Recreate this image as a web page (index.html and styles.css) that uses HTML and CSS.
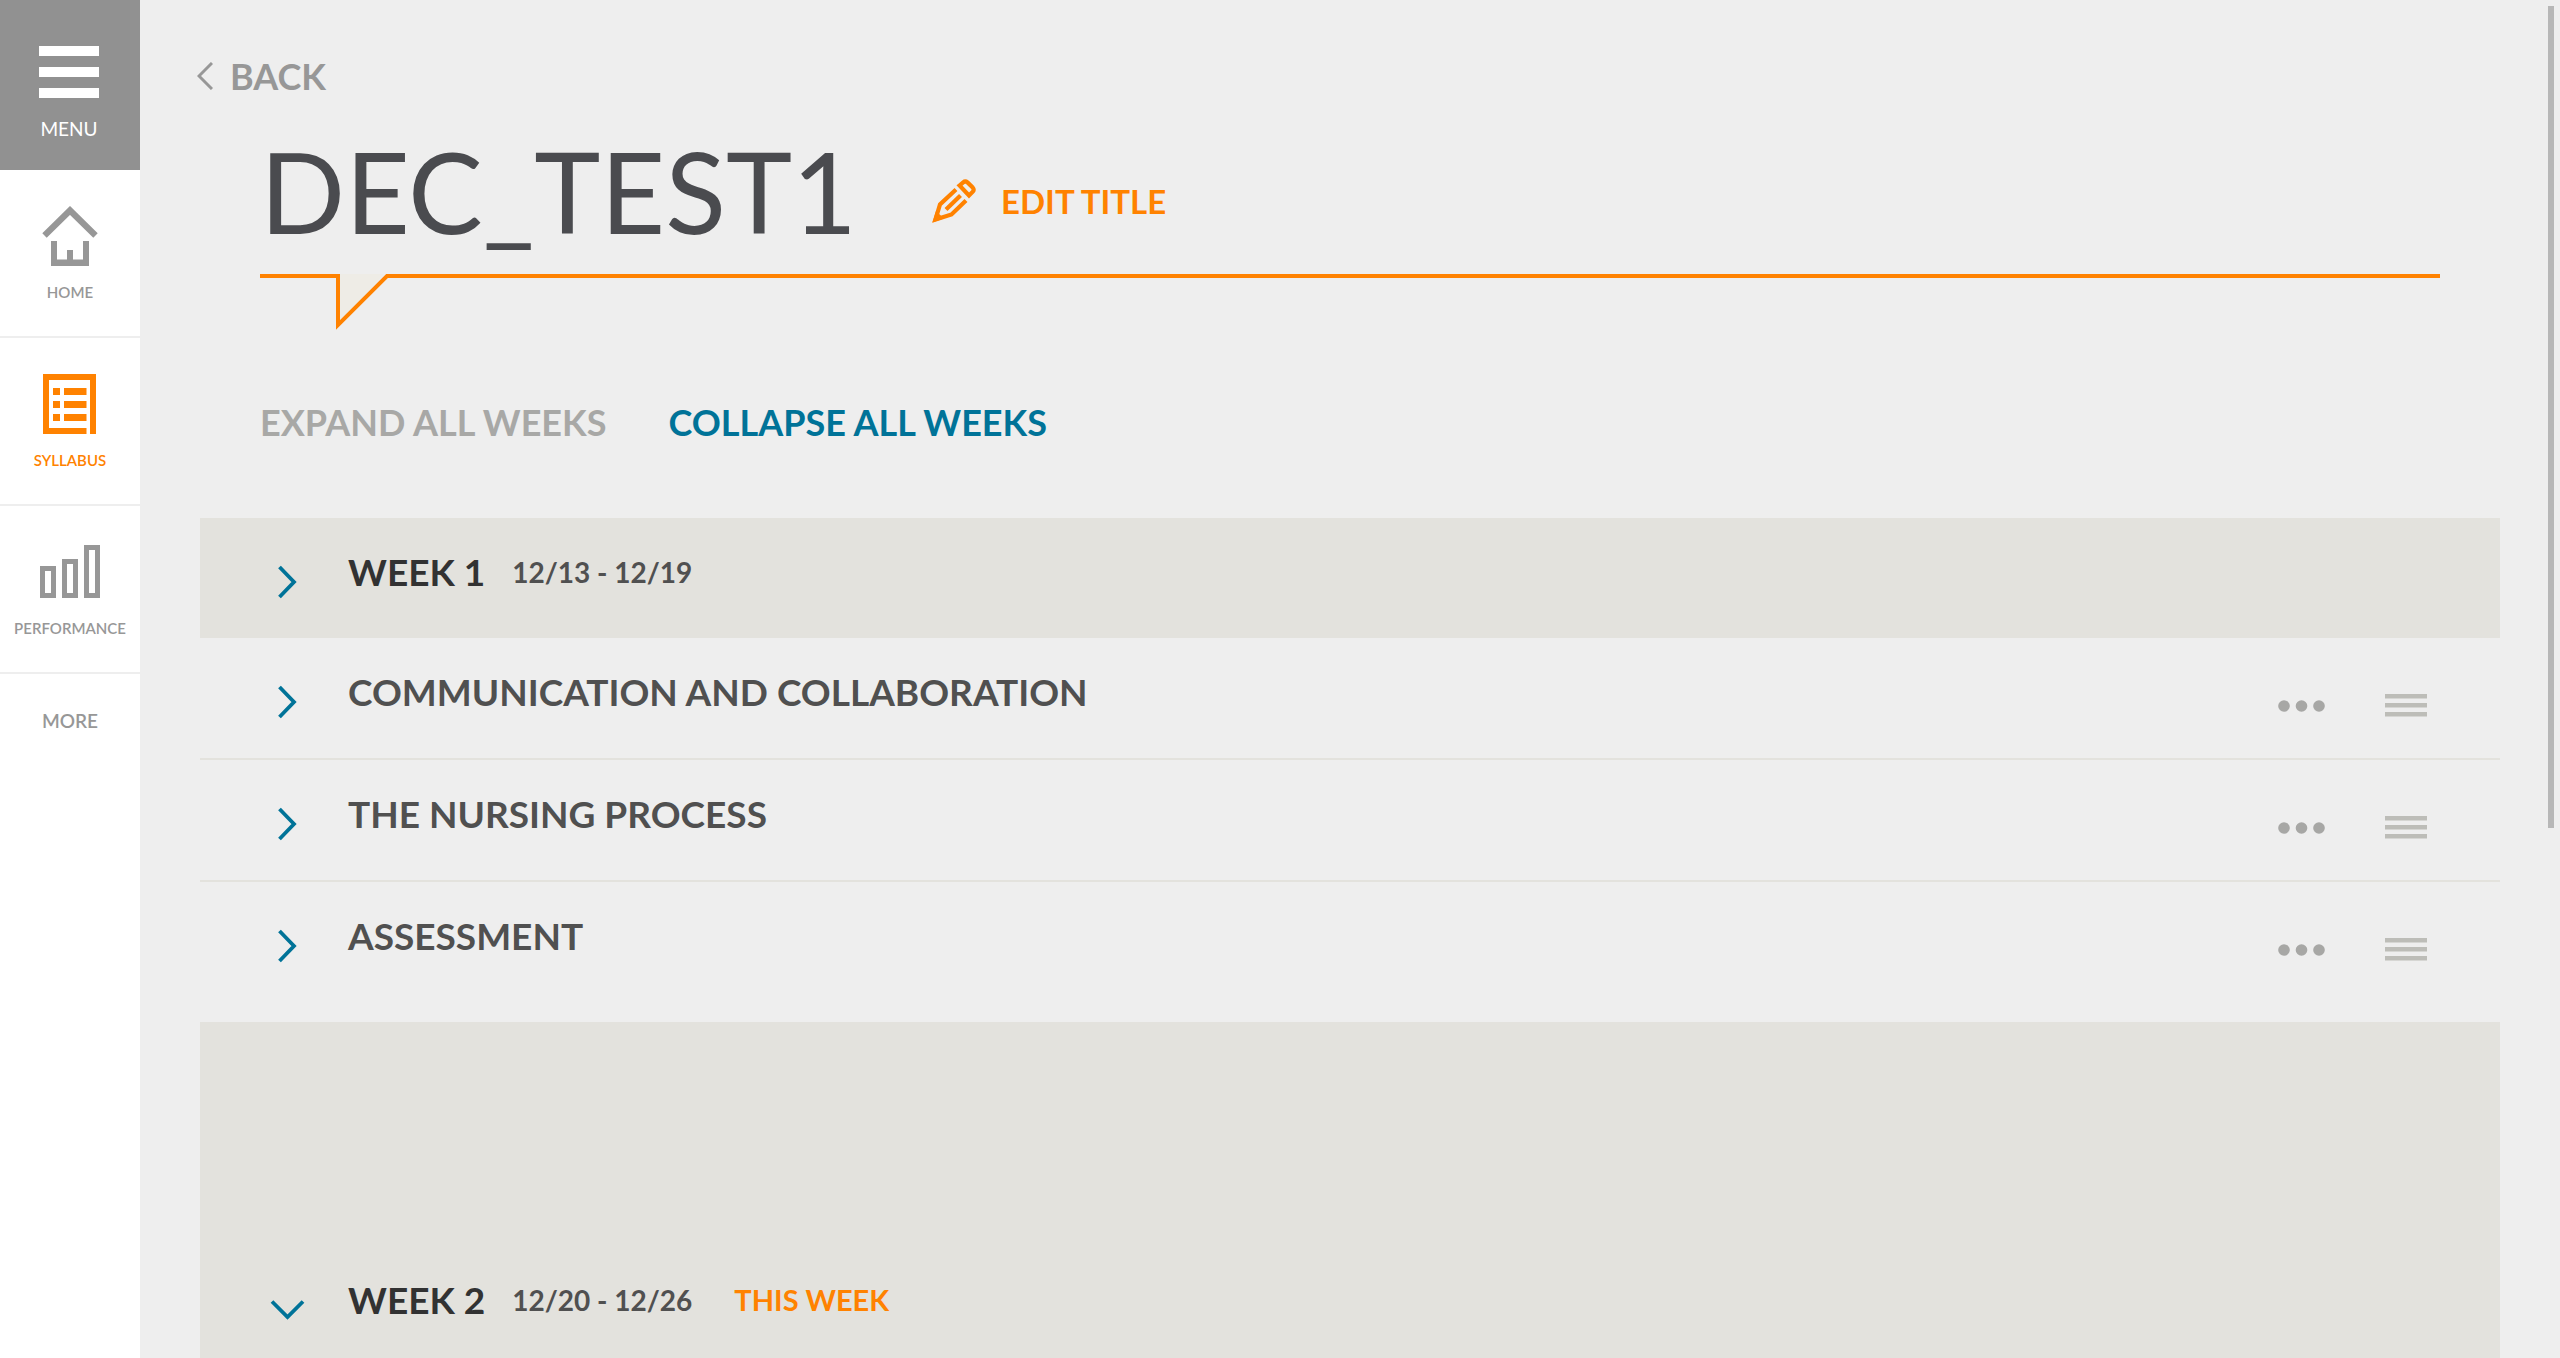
FILE: index.html
```html
<!DOCTYPE html>
<html lang="en">
<head>
<meta charset="utf-8">
<meta name="viewport" content="width=device-width, initial-scale=1">
<title>DEC_TEST1 - Syllabus</title>
<link rel="stylesheet" href="styles.css">
</head>
<body>
<svg class="sprite" aria-hidden="true">
  <symbol id="chevron-right" viewBox="0 0 36 36"><path d="M9.500 3L24 18L9.500 33" fill="none" stroke="currentColor" stroke-width="3.800"/></symbol>
  <symbol id="chevron-down" viewBox="0 0 36 36"><path d="M2 9.500L17.500 25L33 9.500" fill="none" stroke="currentColor" stroke-width="3.800"/></symbol>
  <symbol id="dots" viewBox="0 0 48 36"><g fill="currentColor"><circle cx="6" cy="18" r="5.800"/><circle cx="23.500" cy="18" r="5.800"/><circle cx="41" cy="18" r="5.800"/></g></symbol>
  <symbol id="grip" viewBox="0 0 44 36"><path d="M1 6h42v4.500H1zM1 15h42v4.500H1zM1 24h42v4.500H1z" fill="currentColor"/></symbol>
</svg>
<div class="app">
  <nav class="sidebar" aria-label="Main">
    <button class="menu" type="button">
      <svg width="60" height="52" viewBox="0 0 60 52"><path d="M0 0h60v10H0zM0 21h60v10H0zM0 42h60v10H0z" fill="currentColor"/></svg>
      <span>MENU</span>
    </button>
    <a class="nav-item" href="#home">
      <svg width="60" height="60" viewBox="0 0 60 60"><path d="M4.500 29.500L30 4.400L55.500 29.500" fill="none" stroke="currentColor" stroke-width="6.300"/><path d="M11 35h6v18.500h10V44h6v9.500h10V35h6v25H11z" fill="currentColor"/></svg>
      <span>HOME</span>
    </a>
    <a class="nav-item active" href="#syllabus" aria-current="page">
      <svg width="60" height="60" viewBox="0 0 60 60"><path d="M3 0h53v60h-6V6H9v48h37.500v6H3zM13 14h7v7h-7zM24 14h22.500v7H24zM13 27h7v7h-7zM24 27h22.500v7H24zM13 40h7v7h-7zM24 40h22.500v7H24z" fill="currentColor"/></svg>
      <span>SYLLABUS</span>
    </a>
    <a class="nav-item" href="#performance">
      <svg width="60" height="60" viewBox="0 0 60 60"><path d="M2.500 26.500h11v27h-11zM24.500 19.500h11v34h-11zM46.500 5.500h11v48h-11z" fill="none" stroke="currentColor" stroke-width="5"/></svg>
      <span>PERFORMANCE</span>
    </a>
    <a class="more" href="#more">MORE</a>
  </nav>

  <main class="main">
    <a class="back" href="#back">
      <svg width="16" height="28" viewBox="0 0 16 28"><path d="M15 1L2 14L15 27" fill="none" stroke="currentColor" stroke-width="3"/></svg>
      <span>BACK</span>
    </a>
    <header class="header">
      <div class="title-row">
        <h1>DEC_TEST1</h1>
        <button class="edit" type="button">
          <svg width="44" height="44" viewBox="0 0 44 44"><g fill="none" stroke="currentColor" stroke-width="4.200"><path d="M24 10.500L8 25.500L3.500 40.500L19.500 35.500L34 21.500"/><path d="M14 30.500L28.500 16.500"/><path d="M27.500 6.500L31.200 3.300Q33.300 1.600 35.500 3.400L40.700 8.500Q42.500 10.600 40.800 12.700L37 16.500Z"/></g><path d="M.3 43.500L4 32L12 39.500z" fill="currentColor"/></svg>
          <span>EDIT TITLE</span>
        </button>
      </div>
      <div class="rule">
        <svg width="130" height="56" viewBox="0 0 130 56"><path d="M80 0h44L80 48z" fill="#eeece6"/><path d="M0 2H78V51L127 2H130" fill="none" stroke="#ff8200" stroke-width="4"/></svg>
        <div class="rule-line"></div>
      </div>
      <div class="toggles">
        <button type="button" class="toggle muted">EXPAND ALL WEEKS</button>
        <button type="button" class="toggle">COLLAPSE ALL WEEKS</button>
      </div>
    </header>

    <section class="weeks">
      <div class="row week">
        <button class="chevron" type="button" aria-label="Expand week 1"><svg width="36" height="36"><use href="#chevron-right"/></svg></button>
        <h2>WEEK 1</h2>
        <span class="dates">12/13 - 12/19</span>
      </div>
      <ul class="topics">
        <li class="row">
          <button class="chevron" type="button" aria-label="Expand topic"><svg width="36" height="36"><use href="#chevron-right"/></svg></button>
          <h3>COMMUNICATION AND COLLABORATION</h3>
          <div class="actions">
            <button type="button" aria-label="Options"><svg width="48" height="36"><use href="#dots"/></svg></button>
            <button class="grip" type="button" aria-label="Reorder"><svg width="44" height="36"><use href="#grip"/></svg></button>
          </div>
        </li>
        <li class="row">
          <button class="chevron" type="button" aria-label="Expand topic"><svg width="36" height="36"><use href="#chevron-right"/></svg></button>
          <h3>THE NURSING PROCESS</h3>
          <div class="actions">
            <button type="button" aria-label="Options"><svg width="48" height="36"><use href="#dots"/></svg></button>
            <button class="grip" type="button" aria-label="Reorder"><svg width="44" height="36"><use href="#grip"/></svg></button>
          </div>
        </li>
        <li class="row">
          <button class="chevron" type="button" aria-label="Expand topic"><svg width="36" height="36"><use href="#chevron-right"/></svg></button>
          <h3>ASSESSMENT</h3>
          <div class="actions">
            <button type="button" aria-label="Options"><svg width="48" height="36"><use href="#dots"/></svg></button>
            <button class="grip" type="button" aria-label="Reorder"><svg width="44" height="36"><use href="#grip"/></svg></button>
          </div>
        </li>
      </ul>
      <div class="row week current">
        <button class="chevron" type="button" aria-label="Collapse week 2"><svg width="36" height="36"><use href="#chevron-down"/></svg></button>
        <h2>WEEK 2</h2>
        <span class="dates">12/20 - 12/26</span>
        <span class="badge">THIS WEEK</span>
      </div>
    </section>
  </main>
  <div class="scroll-thumb"></div>
</div>
</body>
</html>
```
FILE: styles.css
```css
* { box-sizing: border-box; }

body {
  margin: 0;
  background: #eee;
  color: #505050;
  font-family: Lato, "Open Sans", sans-serif;
  font-weight: 700;
}

h1, h2, h3, ul { margin: 0; padding: 0; }
h2, h3 { font-size: 37px; line-height: 48px; font-weight: 700; }
a { color: inherit; text-decoration: none; }
svg { display: block; flex: none; }
button {
  margin: 0;
  padding: 0;
  border: 0;
  background: none;
  color: inherit;
  font: inherit;
  cursor: pointer;
}

.sprite { position: absolute; width: 0; height: 0; }
.app { display: flex; height: 100vh; }

/* Sidebar */
.sidebar {
  flex: none;
  width: 140px;
  background: #fff;
  color: #979797;
  font-weight: 600;
  text-align: center;
}
.menu, .nav-item {
  display: flex;
  flex-direction: column;
  align-items: center;
  width: 100%;
}
.menu {
  gap: 19px;
  height: 170px;
  padding: 46px 2px 0 0;
  background: #919191;
  color: #fff;
  font-size: 19px;
  line-height: 24px;
  font-weight: 400;
}
.nav-item {
  gap: 16px;
  height: 168px;
  padding-top: 36px;
  border-bottom: 2px solid #eee;
  font-size: 15px;
  line-height: 20px;
}
.active { color: #ff8200; }
.more { display: block; padding-top: 35px; font-size: 19px; line-height: 24px; }

/* Page */
.main {
  flex: 1;
  min-width: 0;
  padding: 54px 60px 0;
  overflow-y: auto;
  scrollbar-width: none;
}
.back {
  display: flex;
  align-items: center;
  gap: 17px;
  width: max-content;
  margin-left: -3px;
  color: #979797;
  font-size: 36px;
  line-height: 44px;
}
.header { padding: 33px 60px 0; }
.title-row { display: flex; align-items: center; gap: 75px; }
h1 {
  color: #4a4b4f;
  font-size: 112px;
  line-height: 120px;
  font-weight: 400;
}
.edit {
  display: flex;
  align-items: center;
  gap: 25px;
  padding-top: 20px;
  color: #ff8200;
  font-size: 33px;
  line-height: 40px;
}
.rule { display: flex; margin-top: 23px; }
.rule-line { flex: 1; height: 4px; background: #ff8200; }
.toggles { display: flex; gap: 62px; margin-top: 70px; }
.toggle { color: #007398; font-size: 36px; line-height: 44px; }
.toggle.muted { color: #a8a8a6; }

/* Weeks */
.weeks { margin-top: 74px; }
.row {
  display: flex;
  align-items: flex-start;
  height: 120px;
  padding: 30px 72px 0 70px;
}
.week { background: #e3e2dd; color: #323232; }
.current { height: 344px; padding-top: 254px; }
.topics { padding-bottom: 20px; list-style: none; }
.topics .row + .row { height: 122px; border-top: 2px solid #e3e2dd; }
.chevron { margin: 16px 42px 0 0; color: #007398; }
.dates, .badge { font-size: 28px; line-height: 48px; }
.dates { margin-left: 27px; color: #505050; }
.badge { margin-left: 42px; color: #ff8200; font-size: 29px; }
.actions {
  display: flex;
  gap: 58px;
  margin: 20px 0 0 auto;
  color: #a7a7a5;
}
.grip { color: #bdbdb8; }

.scroll-thumb {
  position: fixed;
  top: 6px;
  right: 6px;
  width: 6px;
  height: 822px;
  background: #b7b7b7;
}
```
